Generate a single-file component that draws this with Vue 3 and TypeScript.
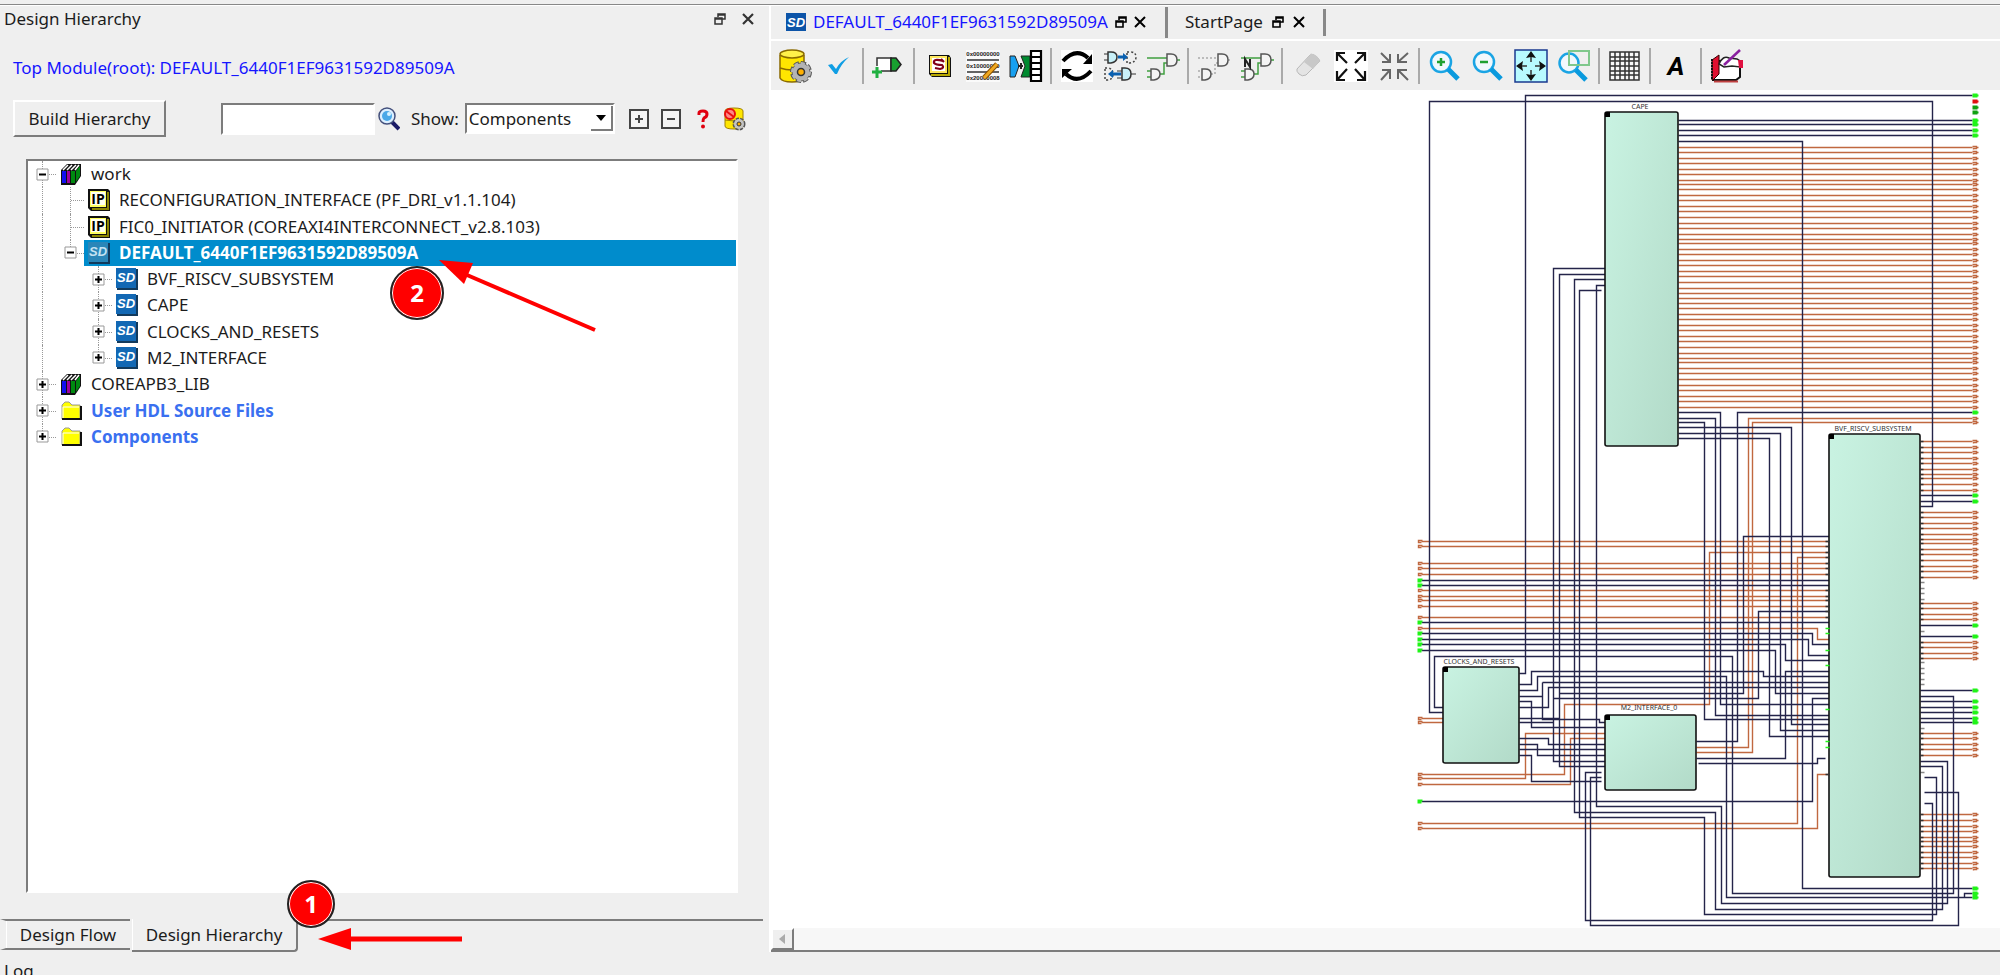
<script setup lang="ts">
import { ref } from 'vue'

type NodeIcon = 'books' | 'ip' | 'sd' | 'folder'
interface TreeRow {
  label: string
  level: number
  icon: NodeIcon
  state: 'open' | 'closed' | 'leaf'
  guides: string[]
  strong?: boolean
}

const rows: TreeRow[] = [
  { label: 'work', level: 0, icon: 'books', state: 'open', guides: ['full'] },
  { label: 'RECONFIGURATION_INTERFACE (PF_DRI_v1.1.104)', level: 1, icon: 'ip', state: 'leaf', guides: ['full', 'full'] },
  { label: 'FIC0_INITIATOR (COREAXI4INTERCONNECT_v2.8.103)', level: 1, icon: 'ip', state: 'leaf', guides: ['full', 'full'] },
  { label: 'DEFAULT_6440F1EF9631592D89509A', level: 1, icon: 'sd', state: 'open', guides: ['full', 'half'] },
  { label: 'BVF_RISCV_SUBSYSTEM', level: 2, icon: 'sd', state: 'closed', guides: ['full', 'none', 'full'] },
  { label: 'CAPE', level: 2, icon: 'sd', state: 'closed', guides: ['full', 'none', 'full'] },
  { label: 'CLOCKS_AND_RESETS', level: 2, icon: 'sd', state: 'closed', guides: ['full', 'none', 'full'] },
  { label: 'M2_INTERFACE', level: 2, icon: 'sd', state: 'closed', guides: ['full', 'none', 'half'] },
  { label: 'COREAPB3_LIB', level: 0, icon: 'books', state: 'closed', guides: ['full'] },
  { label: 'User HDL Source Files', level: 0, icon: 'folder', state: 'closed', guides: ['full'], strong: true },
  { label: 'Components', level: 0, icon: 'folder', state: 'closed', guides: ['half'], strong: true },
]
const selected = ref(3)
const filter = ref('')
const show = ref('Components')

const toolbar: string[] = [
  'Generate', 'Check', '|', 'Add port', '|', 'Auto connect', 'Memory map', 'Bus interface', '|',
  'Refresh', 'Swap', 'Show nets', '|', 'Hide nets', 'Net names', '|', 'Erase', 'Expand', 'Collapse', '|',
  'Zoom in', 'Zoom out', 'Fit', 'Zoom area', '|', 'Grid', '|', 'Text', '|', 'Notes',
]

const blocks = [
  { name: 'CAPE', x: 1605, y: 112, w: 73, h: 334, lx: 1640, ly: 109 },
  { name: 'BVF_RISCV_SUBSYSTEM', x: 1829, y: 434, w: 91, h: 443, lx: 1873, ly: 431 },
  { name: 'CLOCKS_AND_RESETS', x: 1443, y: 667, w: 76, h: 96, lx: 1479, ly: 664 },
  { name: 'M2_INTERFACE_0', x: 1605, y: 715, w: 91, h: 75, lx: 1649, ly: 710 },
]

/* nets between blocks */
const navyNets: string[] = [
  'M1519 673H1525V95H1972',
  'M1443 712H1429V101H1932V506H1920',
  'M1678 141H1802V888H1972',
  'M1605 268H1553V761H1605', 'M1605 274H1559V766H1605',
  'M1605 279H1574V812H1715V909H1942V766H1920',
  'M1601 290H1579V817H1704V914H1936V777H1924',
  'M1605 285H1596V806H1721V903H1947V761H1920',
  'M1678 412H1720V704H1829', 'M1678 418H1715V715H1829', 'M1678 422H1704V719H1829',
  'M1678 427H1791V724H1829', 'M1678 433H1780V730H1829', 'M1678 438H1769V736H1829',
  'M1972 412H1737V741H1696',
  'M1443 707H1434V656H1732V893H1953V696H1920',
  'M1519 684H1531V671H1763V676H1829',
  'M1519 690H1537V676H1726V897H1972', 'M1964 897V893H1972',
  'M1519 696H1542M1542 682V719H1599V722H1605M1542 682H1829',
  'M1519 707H1548V687H1829', 'M1519 701H1531V727H1605',
  'M1519 718H1559M1519 722H1553',
  'M1553 698H1758V611H1829', 'M1559 693H1743V536H1829',
  'M1519 738H1548V744H1605', 'M1519 744H1537V755H1605', 'M1519 749H1605', 'M1519 755H1531V781H1601',
  'M1696 758H1785V671H1829', 'M1698 763H1817V758H1825',
  'M1601 772H1585V920H1932V803H1924', 'M1601 777H1590V925H1958V792H1924',
  'M1421 801H1812V698H1829',
  'M1421 580H1829', 'M1421 585H1829', 'M1421 622H1829',
  'M1421 633H1812V644H1829', 'M1421 639H1808V655H1829', 'M1421 644H1785V660H1829', 'M1421 650H1775V693H1829',
]
const rustNets: string[] = [
  'M1972 418H1748V747H1696', 'M1972 422H1752V752H1696',
  'M1421 823H1797V557H1829', 'M1421 828H1817V774H1829',
  'M1421 774H1564V704H1709V552H1829', 'M1421 778H1525V733H1605', 'M1421 784H1570V738H1605',
  'M1421 718H1443', 'M1421 722H1443', 'M1421 628H1817V639H1829',
]
const rustLeft = [541, 546, 563, 568, 574, 590, 596, 600, 606, 617]
rustLeft.forEach(y => rustNets.push(`M1421 ${y}H1829`))

const capeNavy = [120, 124, 130, 135]
capeNavy.forEach(y => navyNets.push(`M1678 ${y}H1972`))
const capeRust = [
  147, 152, 158, 163, 169, 174, 180, 184, 189, 195, 200, 206, 211, 217, 223, 228, 234, 239, 243, 249, 254, 260,
  265, 271, 276, 282, 288, 293, 298, 303, 308, 314, 319, 325, 330, 336, 341, 347, 353, 358, 362, 368, 373, 379,
  385, 390, 396, 401, 407,
]
const bvfRust = [
  441, 447, 452, 458, 463, 469, 474, 478, 484, 490, 512, 517, 523, 528, 534, 539, 543, 549, 554, 560, 566, 571, 577,
  603, 608, 614, 619, 642, 647, 653, 658, 733, 738, 744, 749, 755,
  814, 820, 826, 831, 837, 841, 846, 852, 857, 863, 868,
]
const bvfNavy = [495, 501, 625, 636, 690, 701, 707, 712, 718, 722]
capeRust.forEach(y => rustNets.push(`M1678 ${y}H1972`))
bvfRust.forEach(y => rustNets.push(`M1920 ${y}H1972`))
bvfNavy.forEach(y => navyNets.push(`M1920 ${y}H1972`))

const navyPath = navyNets.join('')
const rustPath = rustNets.join('')

const stubs = [582, 588, 593, 599, 631, 662, 668, 673, 679, 684, 728, 772]
const pinTicks = [541, 546, 552, 557, 563, 568, 574, 590, 596, 600, 606, 611, 617, 774]
const greenStubs = [628, 633, 650, 665, 709, 741, 747]

const rightPort = (y: number) => `M1972 ${y - 1}h4v2h-3v1M1976 ${y}h2`
const leftPort = (y: number) => `M1422 ${y - 1}h-4v2h3`
const rustPorts = [...capeRust, ...bvfRust, 418, 422].map(rightPort).join('')
  + [...rustLeft, 628, 718, 722, 774, 778, 784, 823, 828].map(leftPort).join('')
const greenPorts = [95, ...capeNavy, 412, ...bvfNavy, 888, 893, 897].map(rightPort).join('')
  + [580, 585, 622, 633, 639, 644, 650, 801].map(leftPort).join('')
</script>

<template>
  <div class="app">
    <div class="workspace">
      <aside class="side">
        <header class="side-title">
          <h1>Design Hierarchy</h1>
          <button class="bare" aria-label="Float">
            <svg width="12" height="12" viewBox="0 0 12 12"><path d="M4 4V1h7v5H8M4 2h7M1 5h7v6H1zM1 6h7" fill="none" stroke="#333" stroke-width="1.5" /></svg>
          </button>
          <button class="bare" aria-label="Close">
            <svg width="12" height="12" viewBox="0 0 12 12"><path d="M1 1L11 11M11 1L1 11" stroke="#333" stroke-width="2.2" /></svg>
          </button>
        </header>
        <p class="root">Top Module(root): DEFAULT_6440F1EF9631592D89509A</p>
        <div class="controls">
          <button class="build">Build Hierarchy</button>
          <input v-model="filter" class="search" type="text" aria-label="Find">
          <button class="bare find" aria-label="Search">
            <svg width="22" height="24" viewBox="0 0 22 24">
              <path d="M14 15L21 22" stroke="#1a1a66" stroke-width="4" />
              <circle cx="9" cy="9" r="8" fill="#dcefff" stroke="#44507c" stroke-width="1.5" />
              <circle cx="9" cy="9" r="5" fill="#4aa8e8" /><circle cx="11" cy="7" r="2" fill="#d8f2ff" />
            </svg>
          </button>
          <label class="show" for="show">Show:</label>
          <div class="combo">
            <select id="show" v-model="show"><option>Components</option></select>
            <span class="arrow"><svg width="10" height="6" viewBox="0 0 10 6"><path d="M0 0h10L5 6z" /></svg></span>
          </div>
          <button class="bare pm" aria-label="Expand all">
            <svg width="20" height="20" viewBox="0 0 20 20"><path d="M1 1h18v18H1z" fill="#f4f4f4" stroke="#444" stroke-width="2" /><path d="M6 10h8M10 6v8" stroke="#444" stroke-width="2" /></svg>
          </button>
          <button class="bare pm" aria-label="Collapse all">
            <svg width="20" height="20" viewBox="0 0 20 20"><path d="M1 1h18v18H1z" fill="#f4f4f4" stroke="#444" stroke-width="2" /><path d="M6 10h8" stroke="#444" stroke-width="2" /></svg>
          </button>
          <button class="bare help" aria-label="Help">
            <svg width="12" height="20" viewBox="0 0 12 20"><path d="M2 6V4q0-2 4-2t4 3q0 3-3 4-1 1-1 4" fill="none" stroke="#e00010" stroke-width="3" /><circle cx="6" cy="17.5" r="2" fill="#e00010" /></svg>
          </button>
          <button class="bare" aria-label="Options">
            <svg width="23" height="24" viewBox="0 0 23 24">
              <path d="M2 4q0-3 9-3t9 3v15q0 3-9 3t-9-3z" fill="#ffe600" stroke="#a08000" /><path d="M2 13q9 2 18 0" fill="none" stroke="#a08000" />
              <circle cx="7" cy="7" r="5" fill="#f88" stroke="#e81010" stroke-width="2" /><path d="M3 4L11 10" stroke="#e81010" stroke-width="2" />
              <circle cx="16" cy="17" r="5" fill="#bbb" stroke="#555" stroke-width="3" stroke-dasharray="3 1" /><circle cx="16" cy="17" r="5" fill="#c4c4c4" /><circle cx="16" cy="17" r="2" fill="#ffb000" stroke="#333" />
            </svg>
          </button>
        </div>

        <div class="tree">
          <ul role="tree" aria-label="Design Hierarchy">
            <li
              v-for="(row, i) in rows" :key="row.label" role="treeitem" class="row"
              :class="{ selected: selected === i, strong: row.strong }" :aria-selected="selected === i" @click="selected = i"
            >
              <span v-for="(g, n) in row.guides" :key="n" class="guide" :class="[g, { node: n === row.level, inner: row.state === 'leaf' }]">
                <svg v-if="n === row.level && row.state !== 'leaf'" class="box" width="13" height="13" viewBox="0 0 13 13">
                  <path d="M1 1h11v11H1z" fill="#fff" stroke="#999" />
                  <path :d="row.state === 'open' ? 'M3 6.5h7' : 'M3 6.5h7M6.5 3v7'" stroke="#000" stroke-width="2" />
                </svg>
              </span>
              <span class="cell">
                <svg v-if="row.icon === 'books'" width="22" height="22" viewBox="0 0 22 22">
                  <path d="M1 7L7 1H21V13L15 22H1z" fill="#111" />
                  <path d="M2 8h4v12H2z" fill="#1010f0" /><path d="M7 8h3v12H7z" fill="#a000a0" /><path d="M11 8h4v12h-4z" fill="#008a10" /><path d="M16 8L20 3V13L16 19z" fill="#008a10" />
                  <path d="M3 7L8 2M7 7L12 2M11 7L16 2M15 7L19 2" stroke="#fff" stroke-width="1.5" />
                </svg>
                <svg v-else-if="row.icon === 'ip'" width="22" height="22" viewBox="0 0 22 22">
                  <path d="M0 0h20l2 2v20H3l-3-3z" fill="#111" /><path d="M20 3v17H4" fill="none" stroke="#8a8400" stroke-width="2" /><path d="M2 2h16v16H2z" fill="#ffff60" /><path d="M3 3h14v13H3z" fill="#fffff0" />
                  <text x="10" y="15" text-anchor="middle" class="ip">IP</text>
                </svg>
                <svg v-else-if="row.icon === 'sd'" width="22" height="22" viewBox="0 0 22 22">
                  <path d="M1 1h21v21H1z" fill="#123a5c" /><path d="M0 0h20v20H0z" :fill="selected === i ? '#2a86b8' : '#1268b4'" />
                  <text x="10" y="14" text-anchor="middle" class="sd" :class="{ dim: selected === i }">SD</text>
                </svg>
                <svg v-else width="22" height="22" viewBox="0 0 22 22">
                  <path d="M2 19V5L5 2H9L12 5H20V19z" fill="#ff0" stroke="#999" /><path d="M2 19H21V6" fill="none" stroke="#111" stroke-width="2" /><path d="M3 18V7h16" fill="none" stroke="#fff" />
                </svg>
                <span class="label">{{ row.label }}</span>
              </span>
            </li>
          </ul>
          <div class="badge two">2</div>
          <svg class="arrow-two" width="158" height="74" viewBox="0 0 158 74"><path d="M28 15L156 70" stroke="#f00" stroke-width="4" /><path d="M0 0L34 3L25 24z" fill="#f00" /></svg>
        </div>

        <nav class="side-tabs">
          <button class="tab-flow">Design Flow</button>
          <button class="tab-hier">Design Hierarchy</button>
          <span class="rest" />
          <div class="badge one">1</div>
          <svg class="arrow-one" width="144" height="24" viewBox="0 0 144 24"><path d="M30 12H144" stroke="#f00" stroke-width="5" /><path d="M0 12L33 1V23z" fill="#f00" /></svg>
        </nav>
      </aside>

      <main class="editor">
        <nav class="doc-tabs">
          <div class="doc active">
            <svg width="20" height="18" viewBox="0 0 20 18"><path d="M0 0h20v18H0z" fill="#0c54a8" /><text x="10" y="14" text-anchor="middle" class="sd">SD</text></svg>
            <a href="#design">DEFAULT_6440F1EF9631592D89509A</a>
            <button class="bare" aria-label="Float tab"><svg width="12" height="12" viewBox="0 0 12 12"><path d="M4 4V1h7v5H8M4 2h7M1 5h7v6H1zM1 6h7" fill="none" stroke="#000" stroke-width="1.6" /></svg></button>
            <button class="bare" aria-label="Close tab"><svg width="12" height="12" viewBox="0 0 12 12"><path d="M1 1L11 11M11 1L1 11" stroke="#000" stroke-width="2" /></svg></button>
          </div>
          <div class="doc start">
            <a href="#start">StartPage</a>
            <button class="bare" aria-label="Float tab"><svg width="12" height="12" viewBox="0 0 12 12"><path d="M4 4V1h7v5H8M4 2h7M1 5h7v6H1zM1 6h7" fill="none" stroke="#000" stroke-width="1.6" /></svg></button>
            <button class="bare" aria-label="Close tab"><svg width="12" height="12" viewBox="0 0 12 12"><path d="M1 1L11 11M11 1L1 11" stroke="#000" stroke-width="2" /></svg></button>
          </div>
        </nav>

        <div class="toolbar" role="toolbar">
          <template v-for="(t, i) in toolbar" :key="i">
            <span v-if="t === '|'" class="sep" />
            <button v-else class="tool" :aria-label="t">
              <svg width="34" height="34" viewBox="0 0 34 34">
                <g v-if="t === 'Generate'">
                  <path d="M2 6V29q2 4 12 4t12-4V6" fill="#ffe600" stroke="#8a6a00" stroke-width="1.5" /><ellipse cx="14" cy="5" rx="12" ry="4" fill="#fff04a" stroke="#8a6a00" stroke-width="1.5" /><path d="M2 19q12 4 24 0" fill="none" stroke="#8a6a00" stroke-width="1.5" />
                  <circle cx="23" cy="23" r="9" fill="none" stroke="#555" stroke-width="4" stroke-dasharray="5 2" /><circle cx="23" cy="23" r="9" fill="#b4b4b4" stroke="#666" /><circle cx="23" cy="23" r="9" fill="none" stroke="#b4b4b4" stroke-width="2" stroke-dasharray="4 3" /><circle cx="23" cy="23" r="3.5" fill="#ffb000" stroke="#333" stroke-width="1.5" />
                </g>
                <path v-else-if="t === 'Check'" d="M7 16L11 15L15 20Q19 12 28 8Q20 15 16 25H14z" fill="#109ee4" />
                <g v-else-if="t === 'Add port'">
                  <path d="M5 17V9H19V22H9" fill="#fff" stroke="#333" stroke-width="1.5" /><path d="M19 9H24L29 15.5L24 22H19z" fill="#18a030" stroke="#222" stroke-width="1.5" /><path d="M0 23H10M5 18V29" stroke="#20b040" stroke-width="3" />
                </g>
                <g v-else-if="t === 'Auto connect'">
                  <path d="M6 6h20l2 3v19H9l-3-3z" fill="#111" /><path d="M26 8v18H8" fill="none" stroke="#b8a800" stroke-width="2" /><path d="M7 7h17v17H7z" fill="#ffe860" /><path d="M9 9h13v13H9z" fill="#fff" /><path d="M20 12Q10 9 11 14Q13 16 19 16Q22 19 17 20L12 19M18 10L21 13" fill="none" stroke="#800018" stroke-width="2.2" />
                </g>
                <g v-else-if="t === 'Memory map'">
                  <path d="M0 1h34v32H0z" fill="#fafafa" />
                  <text x="17" y="7" text-anchor="middle" class="hex">0x00000000</text><text x="17" y="19" text-anchor="middle" class="hex">0x10000000</text><text x="17" y="31" text-anchor="middle" class="hex">0x20000008</text>
                  <path d="M1 11H33M1 23H33" stroke="#333" stroke-width="1.5" /><path d="M18 29L31 15" stroke="#8a5000" stroke-width="5" /><path d="M18 29L31 15" stroke="#f0a820" stroke-width="3" />
                </g>
                <g v-else-if="t === 'Bus interface'">
                  <path d="M1 7H6L10 17L6 28H1z" fill="#18a0f0" stroke="#222" /><path d="M9 17h5M12 14v6" stroke="#222" stroke-width="2" /><path d="M12 7H21V28H12L16 17z" fill="#008a30" stroke="#222" /><path d="M22 2h10v30H22zM22 8h10M22 14h10M22 20h10M22 26h10" fill="#fff" stroke="#000" stroke-width="2.2" />
                </g>
                <g v-else-if="t === 'Refresh'">
                  <path d="M1 1h32v32H1z" fill="#fff" /><path d="M3 12Q16-2 28 9M31 22Q18 36 6 25" fill="none" stroke="#000" stroke-width="4" /><path d="M32 5V15H23zM2 29V20H12z" />
                </g>
                <g v-else-if="t === 'Swap'">
                  <path d="M1 5H5M1 11H5M28 25H33M14 22H19M14 29H19" stroke="#333" /><path d="M5 3H8Q14 3 14 8T8 14H5z" fill="#c8f0f8" stroke="#333" stroke-width="1.5" /><path d="M19 19H22Q28 19 28 25T22 31H19z" fill="#c8f0f8" stroke="#333" stroke-width="1.5" />
                  <path d="M24 3H27Q33 3 33 8T27 14H24zM2 19H4Q10 19 10 25T4 31H2z" fill="none" stroke="#444" stroke-width="1.5" stroke-dasharray="2 2" /><path d="M15 8H22M9 25H18" stroke="#0a60b0" stroke-width="3" /><path d="M20 4L25 8L20 12zM10 21L5 25L10 29z" fill="#0a60b0" />
                </g>
                <g v-else-if="t === 'Show nets' || t === 'Hide nets' || t === 'Net names'" fill="none" stroke-width="1.5">
                  <path d="M1 9H21M1 22H5M1 28H5M14 25H18V14H21M31 11H34" :stroke="t === 'Hide nets' ? '#aaa' : '#40a040'" :stroke-dasharray="t === 'Hide nets' ? '2 2' : 'none'" />
                  <path d="M21 5H25Q31 5 31 11T25 17H21zM5 20H8Q14 20 14 25T8 31H5z" fill="#f4f4f4" stroke="#555" />
                  <path v-if="t === 'Net names'" d="M5 18V10L10 18V10" stroke="#222" stroke-width="2" />
                </g>
                <g v-else-if="t === 'Erase'">
                  <path d="M6 20L19 6Q22 4 26 8T28 13L15 26Q11 28 8 25T6 20z" fill="#e4e4e4" stroke="#b8b8b8" /><path d="M13 13L22 20L28 13Q29 9 24 6T19 6z" fill="#c8c8c8" />
                </g>
                <g v-else-if="t === 'Expand'">
                  <path d="M0 1h34v32H0z" fill="#fff" /><path d="M3 12V4H11M3 4L13 14M23 4H31V12M31 4L21 14M3 22V31H11M3 31L13 20M23 31H31V22M31 31L21 20" fill="none" stroke="#111" stroke-width="2.2" />
                </g>
                <path v-else-if="t === 'Collapse'" d="M4 4L13 13M5 13H13V5M31 4L21 13M21 5V13H30M4 31L13 21M5 21H13V30M31 31L21 21M30 21H21V30" fill="none" stroke="#666" stroke-width="2" />
                <g v-else-if="t === 'Zoom in' || t === 'Zoom out'">
                  <circle cx="13" cy="13" r="10" fill="#f2f8fc" stroke="#1aa4e4" stroke-width="2.5" /><path d="M20 20L30 30" stroke="#0a9ade" stroke-width="5" /><path d="M9 13H17" stroke="#20a030" stroke-width="2.5" /><path v-if="t === 'Zoom in'" d="M13 9V17" stroke="#20a030" stroke-width="2.5" />
                </g>
                <g v-else-if="t === 'Fit'">
                  <path d="M1 1h32v32H1z" fill="#b8faff" stroke="#1a3a90" stroke-width="1.5" /><path d="M17 2L22 9L17 8L12 9zM17 32L22 25L17 26L12 25zM2 17L9 12L8 17L9 22zM32 17L25 12L26 17L25 22z" fill="#111" /><path d="M17 8V13M17 21V26M8 17H13M21 17H26" stroke="#333" stroke-width="1.5" />
                </g>
                <g v-else-if="t === 'Zoom area'">
                  <circle cx="12" cy="14" r="9.5" fill="#f2f8fc" stroke="#1aa4e4" stroke-width="2.5" /><path d="M19 21L29 31" stroke="#0a9ade" stroke-width="5" /><path d="M12 2h20v14H12z" fill="none" stroke="#80c88c" stroke-width="2" />
                </g>
                <path v-else-if="t === 'Grid'" d="M2 3h29v28H2zM7 3v28M12 3v28M17 3v28M21 3v28M26 3v28M2 8h29M2 12h29M2 17h29M2 22h29M2 26h29" fill="#f8f8f8" stroke="#333" stroke-width="1.5" />
                <text v-else-if="t === 'Text'" x="17" y="26" text-anchor="middle" class="letter">A</text>
                <g v-else>
                  <path d="M3 31V12H30V28L26 31z" fill="#fff" stroke="#111" stroke-width="2" /><path d="M2 11L9 6V25L3 31H2z" fill="#e01030" stroke="#300" /><path d="M2 10V31" stroke="#111" stroke-width="2" stroke-dasharray="2 1" /><path d="M4 32.5H28" stroke="#c04040" stroke-width="2" />
                  <path d="M9 15Q13 6 19 9L27 10L30 12V18L22 17L14 18z" fill="#fff" stroke="#222" stroke-width="1.5" /><path d="M28 11h5v8h-4z" fill="#e01040" /><path d="M14 16L30 1" stroke="#8a20a0" stroke-width="2.5" />
                </g>
              </svg>
            </button>
          </template>
        </div>

        <div id="design" class="canvas">
          <svg class="schematic" width="600" height="838" viewBox="1400 90 600 838" role="img" aria-label="Schematic">
            <defs>
              <linearGradient id="mint" x1="0" y1="0" x2="1" y2="1"><stop offset="0" stop-color="#c9f3e2" /><stop offset="1" stop-color="#b2dac8" /></linearGradient>
            </defs>
            <g transform="translate(0.5 0.5)" fill="none" stroke-width="1.4">
              <path :d="rustPath" class="rust" />
              <path :d="navyPath" class="navy" />
              <path :d="stubs.map(y => `M1920 ${y}h4`).join('')" class="stub" />
            </g>
            <g v-for="b in blocks" :key="b.name">
              <rect :x="b.x" :y="b.y" :width="b.w" :height="b.h" rx="2" class="block" stroke-width="1.6" />
              <rect :x="b.x" :y="b.y" width="5" height="5" />
              <text :x="b.lx" :y="b.ly" text-anchor="middle" class="name">{{ b.name }}</text>
            </g>
            <g transform="translate(0.5 0.5)" fill="none" stroke-width="1.4">
              <path :d="pinTicks.map(y => `M1825 ${y}h4`).join('') + bvfRust.map(y => `M1920 ${y}h3`).join('')" class="tick" />
              <path :d="greenStubs.map(y => `M1825 ${y}h4`).join('')" class="green" />
              <path :d="rustPorts" class="rust" />
              <path :d="greenPorts" class="green" stroke-width="2" />
              <path :d="rightPort(101)" class="red" stroke-width="2" />
              <path :d="rightPort(107) + rightPort(112)" class="deep" stroke-width="2" />
            </g>
          </svg>
        </div>
        <div class="scroll"><button aria-label="Scroll left"><svg width="7" height="10" viewBox="0 0 7 10"><path d="M6 0V10L0 5z" fill="#aaa" /></svg></button></div>
      </main>
    </div>
    <footer class="log">Log</footer>
  </div>
</template>

<style>
html, body, #app { height: 100%; }
body { margin: 0; overflow: hidden; }
</style>

<style scoped>
.app {
  height: 100%;
  overflow: hidden;
  display: flex;
  flex-direction: column;
  background: #efefef;
  color: #1c1c1c;
  font: 17px/24px "Noto Sans", "Open Sans", sans-serif;
}
button, input, select { font: inherit; color: inherit; }
button { padding: 0; }
svg { display: block; }
.workspace {
  flex: 1;
  min-height: 0;
  display: flex;
  margin-top: 4px;
  border-top: 1px solid #888;
  box-shadow: inset 0 1px #fff;
}
.bare { border: 0; background: none; }

.side { flex: 0 0 763px; display: flex; flex-direction: column; }
.side-title { display: flex; align-items: center; gap: 16px; height: 28px; padding: 0 9px 0 4px; }
.side-title h1 { flex: 1; margin: 0; font-size: 17px; font-weight: 400; }
.root { margin: 23px 0 0 13px; color: #1515ff; }
.controls { display: flex; align-items: center; margin: 20px 17px 0 13px; height: 37px; }
.build {
  width: 153px;
  height: 37px;
  border: 2px solid;
  border-color: #fff #7c7c7c #7c7c7c #fff;
  background: #efefef;
}
.search {
  width: 154px;
  height: 32px;
  margin-left: 55px;
  box-sizing: border-box;
  border: 2px solid;
  border-color: #7c7c7c #fff #fff #7c7c7c;
  background: #fff;
}
.find { margin-left: 3px; }
.show { margin-left: 11px; }
.combo { position: relative; width: 150px; height: 31px; margin: 0 auto 0 6px; }
.combo select {
  width: 100%;
  height: 100%;
  appearance: none;
  padding: 0 2px;
  border: 2px solid;
  border-color: #7c7c7c #fff #fff #7c7c7c;
  border-radius: 0;
  background: #fff;
}
.arrow {
  position: absolute;
  top: 3px;
  right: 2px;
  width: 20px;
  height: 23px;
  display: grid;
  place-items: center;
  border-right: 2px solid #7c7c7c;
  border-bottom: 2px solid #7c7c7c;
  pointer-events: none;
}
.pm { margin-right: 12px; }
.help { margin: 0 14px 0 4px; }

.tree {
  position: relative;
  flex: 1;
  margin: 22px 25px 0 26px;
  border: 2px solid;
  border-color: #7c7c7c #fff #fff #7c7c7c;
  background: #fff;
}
.tree ul { display: flex; flex-direction: column; height: 289px; margin: 0; padding: 0; list-style: none; }
.row { flex: 1; display: flex; align-items: stretch; min-height: 0; }
.guide { position: relative; flex: 0 0 28px; display: grid; place-items: center; }
.guide::before { content: ""; position: absolute; left: 14px; top: 0; bottom: 0; border-left: 1px dotted #999; }
.guide.half::before { bottom: 50%; }
.guide.none::before { display: none; }
.guide.node::after { content: ""; position: absolute; left: 15px; right: 0; top: 50%; border-top: 1px dotted #999; }
.box { position: relative; z-index: 1; }
.cell { flex: 1; display: flex; align-items: center; gap: 9px; padding-left: 4px; }
.selected .cell { background: #008ccc; color: #fff; font-weight: 700; }
.strong .label { color: #3a70f0; font-weight: 700; }
.label { white-space: nowrap; }
.ip { font: 700 14px "Open Sans", sans-serif; }
.sd { font: italic 700 13px "Liberation Sans", sans-serif; fill: #fff; }
.sd.dim { fill: #c4e2f2; }

.badge {
  position: absolute;
  box-sizing: border-box;
  display: grid;
  place-items: center;
  border: 2px solid #222;
  border-radius: 50%;
  box-shadow: inset 0 0 0 1px #fff;
  background: #f00;
  color: #fff;
  font-weight: 700;
  font-size: 24px;
}
.two { left: 362px; top: 105px; width: 54px; height: 54px; }
.one { left: 287px; top: -39px; width: 48px; height: 48px; }
.arrow-two { position: absolute; left: 411px; top: 99px; }
.arrow-one { position: absolute; left: 318px; top: 8px; }

.side-tabs { position: relative; display: flex; align-items: flex-start; height: 33px; margin-top: 26px; }
.side-tabs button { border: 0; background: none; box-sizing: border-box; }
.side-tabs .tab-flow { width: 130px; height: 31px; border-top: 2px solid #7c7c7c; border-bottom: 2px solid #7c7c7c; border-left: 6px solid #efefef; box-shadow: inset 1px 0 #fff; }
.side-tabs .tab-hier { width: 166px; height: 33px; margin-left: 2px; border-bottom: 2px solid #7c7c7c; border-right: 2px solid #7c7c7c; border-radius: 0 0 4px; box-shadow: inset 1px 0 #fff; }
.rest { flex: 1; border-top: 2px solid #7c7c7c; }

.editor { flex: 1; min-width: 0; display: flex; flex-direction: column; margin-left: 6px; border-left: 2px solid #fff; }
.doc-tabs { display: flex; align-items: center; height: 34px; border-bottom: 2px solid #fff; }
.doc { display: flex; align-items: center; box-sizing: border-box; border-right: 3px solid #888; height: 31px; }
.doc a { text-decoration: none; color: inherit; }
.doc.active { padding: 0 19px 0 15px; gap: 7px; }
.doc.active a { color: #1515ff; }
.doc.start { padding: 0 18px 0 17px; gap: 9px; height: 27px; }
.toolbar { display: flex; align-items: center; height: 49px; padding-left: 2px; }
.tool { width: 43px; height: 46px; border: 0; background: none; display: grid; place-items: center; }
.sep { flex: 0 0 8px; height: 36px; background: linear-gradient(#aaa, #aaa) center / 2px 100% no-repeat; }
.hex { font: 700 6px "Liberation Sans", sans-serif; fill: #222; }
.letter { font: italic 700 26px Roboto, sans-serif; }

.canvas { flex: 1; min-height: 0; display: flex; justify-content: flex-end; overflow: hidden; background: #fff; }
.schematic { flex: none; }
.navy { stroke: #24244a; }
.rust { stroke: #c06840; }
.stub { stroke: #888; }
.tick { stroke: #333; }
.green { stroke: #20f418; }
.red { stroke: #e01010; }
.deep { stroke: #10a010; }
.block { fill: url(#mint); stroke: #111; }
.name { font: 7px "Noto Sans", sans-serif; fill: #333; }
.scroll { height: 22px; background: #f7f7f7; border-bottom: 2px solid #7c7c7c; }
.scroll button { width: 23px; height: 22px; box-sizing: border-box; display: grid; place-items: center; border: 2px solid; border-color: #fff #7c7c7c #7c7c7c #fff; background: #efefef; }
.log { flex: 0 0 23px; height: 23px; padding: 7px 0 0 4px; box-sizing: border-box; }
</style>
